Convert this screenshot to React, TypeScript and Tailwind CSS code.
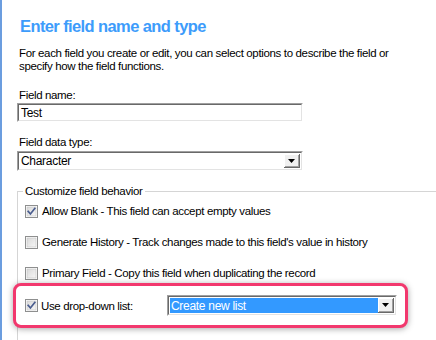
import React from "react";

function CheckBox({ checked }: { checked?: boolean }) {
    return (
        <svg width="13" height="13" viewBox="0 0 13 13" className="shrink-0">
            <defs>
                <linearGradient id="cbfill" x1="0" y1="0" x2="1" y2="1">
                    <stop offset="0" stopColor="#d9d9d9" />
                    <stop offset="1" stopColor="#f7f7f7" />
                </linearGradient>
            </defs>
            <rect x="0.5" y="0.5" width="12" height="12" fill="#ffffff" stroke="#8e8f8f" />
            <rect x="2" y="2" width="9" height="9" fill="url(#cbfill)" stroke="#c4c4c4" strokeWidth="0.6" />
            {checked && (
                <path d="M3.2 6.4 L5.4 9 L9.8 3.4" fill="none" stroke="#4a5d8f" strokeWidth="1.7" strokeLinecap="square" />
            )}
        </svg>
    );
}

function DropButton() {
    return (
        <div className="w-[16px] h-full shrink-0 bg-[#f0f0f0] border-r border-b border-r-[#696969] border-b-[#696969] shadow-[inset_1px_1px_0_#ffffff,inset_-1px_-1px_0_#a0a0a0] flex items-center justify-center">
            <svg width="7" height="4" viewBox="0 0 7 4">
                <path d="M0 0 H7 L3.5 4 Z" fill="#000000" />
            </svg>
        </div>
    );
}

function Combo({ value, selected, className }: { value: string; selected?: boolean; className: string }) {
    return (
        <div className={`${className} flex border-t border-l border-t-[#a0a0a0] border-l-[#a0a0a0] border-r border-b border-r-[#ffffff] border-b-[#ffffff]`}>
            <div className="flex flex-1 border-t border-l border-t-[#696969] border-l-[#696969] border-r border-b border-r-[#e3e3e3] border-b-[#e3e3e3] bg-white p-[1px]">
                <div className={`flex-1 flex items-center pl-[1px] text-[12px] tracking-[-0.3px] ${selected ? "bg-[#3399ff] text-white" : "text-black"}`}>
                    {value}
                </div>
                <DropButton />
            </div>
        </div>
    );
}

function Option({ checked, label }: { checked?: boolean; label: string }) {
    return (
        <div className="flex items-center gap-[4px] h-[14px] pl-[7px] text-[11.5px] tracking-[-0.35px] leading-[14px]">
            <CheckBox checked={checked} />
            <span>{label}</span>
        </div>
    );
}

export default function App() {
    return (
        <div className="w-[436px] h-[340px] overflow-hidden bg-white flex font-['Liberation_Sans',Arial,sans-serif] text-black">
            <div className="w-[2px] shrink-0 bg-[#6b9ddf]" />
            <div className="pl-[15px] pt-[15px] flex flex-col">
                <h1 className="text-[16.5px] leading-[22px] font-bold tracking-[-0.6px] text-[#3d9cfb] pl-[3px]">
                    Enter field name and type
                </h1>
                <p className="mt-[10px] w-[392px] text-[11.5px] tracking-[-0.35px] leading-[13px] pl-[2px]">
                    For each field you create or edit, you can select options to describe the field or specify how the field functions.
                </p>

                <label className="mt-[15px] text-[11.5px] tracking-[-0.35px] leading-[14px] pl-[2px]">Field name:</label>
                <div className="mt-[1px] w-[286px] h-[19px] flex border-t border-l border-t-[#a0a0a0] border-l-[#a0a0a0] border-r border-b border-r-[#ffffff] border-b-[#ffffff]">
                    <div className="flex-1 flex items-center pl-[2px] text-[12px] tracking-[-0.3px] border-t border-l border-t-[#696969] border-l-[#696969] border-r border-b border-r-[#e3e3e3] border-b-[#e3e3e3]">
                        Test
                    </div>
                </div>

                <label className="mt-[13px] text-[11.5px] tracking-[-0.35px] leading-[14px] pl-[2px]">Field data type:</label>
                <Combo value="Character" className="mt-[2px] w-[286px] h-[20px]" />

                <fieldset className="mt-[13px] w-[440px] h-[200px] border-t border-l border-[#d5d5d5]">
                    <legend className="ml-[5px] px-[2px] text-[11.5px] tracking-[-0.35px] leading-[14px]">Customize field behavior</legend>
                    <div className="mt-[6px] flex flex-col">
                        <Option checked label="Allow Blank - This field can accept empty values" />
                        <div className="mt-[17px]">
                            <Option label="Generate History - Track changes made to this field's value in history" />
                        </div>
                        <div className="mt-[17px]">
                            <Option label="Primary Field - Copy this field when duplicating the record" />
                        </div>
                        <div className="mt-[3px] ml-[-5px] w-[395px] h-[45px] rounded-[8px] border-[3px] border-[#f2386e] bg-white shadow-[0_1px_6px_rgba(0,0,0,0.35)] flex items-center justify-between pl-[9px] pr-[8px]">
                            <div className="flex items-center gap-[3px] text-[11.5px] tracking-[-0.35px] leading-[14px]">
                                <CheckBox checked />
                                <span>Use drop-down list:</span>
                            </div>
                            <Combo value="Create new list" selected className="w-[230px] h-[21px]" />
                        </div>
                    </div>
                </fieldset>
            </div>
        </div>
    );
}
